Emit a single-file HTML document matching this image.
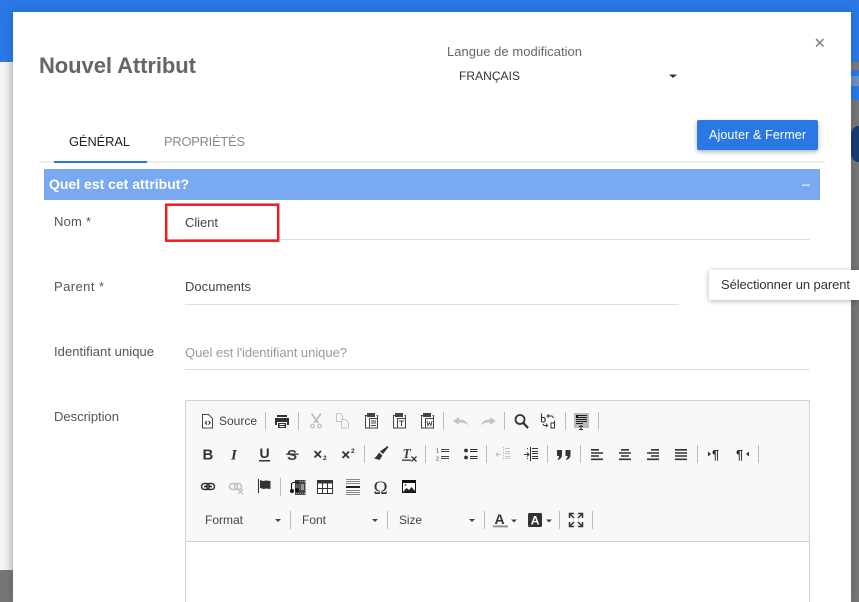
<!DOCTYPE html>
<html lang="fr"><head><meta charset="utf-8"><title>Nouvel Attribut</title>
<style>
html,body{margin:0;padding:0}
body{width:859px;height:602px;overflow:hidden;position:relative;background:#757575;font-family:"Liberation Sans",sans-serif}
div{position:absolute}
svg{position:absolute;left:0;top:0}
text{font-family:"Liberation Sans",sans-serif}
</style></head><body>
<div style="left:0;top:0;width:859px;height:62px;background:#2a78e4"></div>
<div style="left:851px;top:62px;width:8px;height:8px;background:#7a7a7a"></div>
<div style="left:851px;top:70px;width:8px;height:30px;background:#2a78e4"></div>
<div style="left:851px;top:76px;width:8px;height:10px;background:#6f8fbe"></div>
<div style="left:851px;top:126px;width:8px;height:36px;background:#163d73;border-radius:14px 0 0 14px"></div>
<div style="left:0;top:62px;width:13px;height:508px;background:linear-gradient(90deg,#f6f6f6,#f2f2f2 40%,#d8d8d8)"></div>
<div style="left:13px;top:12px;width:838px;height:590px;background:#fff;box-shadow:0 0 8px rgba(0,0,0,.18)"></div>
<div style="left:697px;top:120px;width:121px;height:30px;background:#2a78e4;border-radius:2px;box-shadow:0 2px 5px rgba(0,0,0,.3)"></div>
<div style="left:709px;top:270px;width:150px;height:30px;background:#fff;border-radius:2px 0 0 2px;box-shadow:0 1px 6px rgba(0,0,0,.3)"></div>
<svg width="859" height="602" viewBox="0 0 859 602">
<!-- header -->
<text x="39" y="73" font-size="22" font-weight="700" fill="#666" textLength="157">Nouvel Attribut</text>
<text x="447" y="56" font-size="13" fill="#666" textLength="135">Langue de modification</text>
<text x="459" y="80" font-size="12" fill="#333" textLength="61">FRANÇAIS</text>
<path d="M669 74.500h8l-4 3.500z" fill="#333"/>
<path d="M816 39l7.500 7.500M823.500 39l-7.500 7.500" stroke="#777" stroke-width="1.400" fill="none"/>
<text x="69" y="146" font-size="12.800" fill="#222" textLength="61">GÉNÉRAL</text>
<text x="164" y="146" font-size="12.800" fill="#888" textLength="81">PROPRIÉTÉS</text>
<text x="709" y="139" font-size="12.500" fill="#fff" textLength="97">Ajouter &amp; Fermer</text>
<rect x="39" y="161" width="786" height="2" fill="#eee"/>
<rect x="54" y="161" width="93" height="2" fill="#2a78e4"/>
<rect x="44" y="169" width="776" height="31" fill="#78a9f1"/>
<text x="49" y="189" font-size="14" font-weight="700" fill="#fff" textLength="140">Quel est cet attribut?</text>
<rect x="802" y="184.500" width="8" height="1.200" fill="#e4eefc"/>
<!-- form -->
<text x="54" y="226" font-size="13" fill="#555" textLength="37">Nom *</text>
<text x="185" y="227" font-size="13" fill="#444" textLength="33">Client</text>
<rect x="185" y="239" width="625" height="1" fill="#ddd"/>
<rect x="166.200" y="204.700" width="112" height="36" fill="none" stroke="#f5181c" stroke-width="2.500"/>
<text x="54" y="291" font-size="13" fill="#555" textLength="50">Parent  *</text>
<text x="185" y="291" font-size="13" fill="#444" textLength="66">Documents</text>
<rect x="185" y="304" width="494" height="1" fill="#ddd"/>
<text x="721" y="289" font-size="13" fill="#333" textLength="129">Sélectionner un parent</text>
<text x="54" y="356" font-size="13" fill="#555" textLength="100">Identifiant unique</text>
<text x="185" y="357" font-size="13" fill="#999" textLength="162">Quel est l'identifiant unique?</text>
<rect x="185" y="369" width="625" height="1" fill="#ddd"/>
<text x="54" y="421" font-size="13" fill="#555" textLength="65">Description</text>
<!-- editor -->
<rect x="185.500" y="400.500" width="624" height="210" fill="#fff" stroke="#d1d1d1"/>
<rect x="186" y="401" width="623" height="140" fill="#f8f8f8"/>
<rect x="186" y="541" width="623" height="1" fill="#d1d1d1"/>
<!-- separators -->
<g fill="#bcbcbc">
<rect x="265" y="412" width="1" height="18"/><rect x="298" y="412" width="1" height="18"/><rect x="443" y="412" width="1" height="18"/><rect x="504" y="412" width="1" height="18"/><rect x="565" y="412" width="1" height="18"/><rect x="598" y="412" width="1" height="18"/>
<rect x="364" y="445" width="1" height="18"/><rect x="425" y="445" width="1" height="18"/><rect x="486" y="445" width="1" height="18"/><rect x="547" y="445" width="1" height="18"/><rect x="580" y="445" width="1" height="18"/><rect x="697" y="445" width="1" height="18"/><rect x="758" y="445" width="1" height="18"/>
<rect x="280" y="478" width="1" height="18"/>
<rect x="290" y="511" width="1" height="18"/><rect x="387" y="511" width="1" height="18"/><rect x="484" y="511" width="1" height="18"/><rect x="559" y="511" width="1" height="18"/><rect x="592" y="511" width="1" height="18"/>
</g>
<!-- row 1 -->
<path d="M202.500 414.500h6l4 4v9.500h-10z" fill="#fff" stroke="#444" stroke-width="1"/>
<path d="M207 421l-1.800 1.800 1.800 1.800M208.500 421l1.800 1.800-1.800 1.800" stroke="#333" stroke-width="1.100" fill="none"/>
<text x="219" y="425" font-size="12" fill="#444" textLength="38">Source</text>
<path d="M277 415h10v2h-10zM275 418h14v7h-2v-3h-10v3h-2zM278 423h8v5h-8z" fill="#333"/>
<path d="M279.500 424.500h5M279.500 426.500h5" stroke="#fff"/>
<g stroke="#bbb" stroke-width="1.700" fill="none"><path d="M311.500 413.500l7 9.500M321 413.500l-7 9.500"/><circle cx="312.500" cy="426" r="1.800" stroke-width="1.200"/><circle cx="319.500" cy="426" r="1.800" stroke-width="1.200"/></g>
<path d="M336.500 413.500h4l2 2.500v3M341.500 419.500h4l3 3v5.500h-7zM336.500 413.500v8h5" fill="none" stroke="#c4c4c4"/>
<g fill="none" stroke="#444" stroke-width="1"><path d="M367.500 415.500h-2v12.500h5"/><rect x="367.500" y="413.500" width="7" height="3" fill="#444"/><path d="M376.500 415.500h1v12.500h-8v-9.500h8"/><path d="M371 421h5M371 423h5M371 425.500h5"/></g>
<g fill="none" stroke="#444" stroke-width="1"><path d="M395.500 415.500h-2v12.500h5"/><rect x="395.500" y="413.500" width="7" height="3" fill="#444"/><path d="M404.500 415.500h1v12.500h-8v-9.500h8"/><path d="M399 421h5M401.500 421v5"/></g>
<g fill="none" stroke="#444" stroke-width="1"><path d="M423.500 415.500h-2v12.500h5"/><rect x="423.500" y="413.500" width="7" height="3" fill="#444"/><path d="M432.500 415.500h1v12.500h-8v-9.500h8"/><path d="M427 421l1 4.500 1.500-3 1.500 3 1-4.500" stroke-width=".9"/></g>
<path d="M453 421l6-4v2.500c5 0 8 1.500 9 6-2-2.500-5-3-9-3v2.500z" fill="#c4c4c4"/>
<path d="M496 421l-6-4v2.500c-5 0-8 1.500-9 6 2-2.500 5-3 9-3v2.500z" fill="#c4c4c4"/>
<circle cx="520" cy="419.500" r="4.500" fill="none" stroke="#333" stroke-width="1.800"/><path d="M523.500 423l4.500 5" stroke="#333" stroke-width="2.200"/>
<path d="M541.500 413.500v8.500M541.500 417.500h2.500l1.200 1.500v1.500l-1.200 1.500h-2.500" fill="none" stroke="#333" stroke-width="1.100"/>
<path d="M549 414.500l-1.800 1.500 1.800 1.500M547.500 416h4.500l1.500 2M543 424l1 1.500h3.500M546 423.500l1.500 2-1.500 1.500M551 423h3.500v5h-3.500zM554.500 420.500v7.500" fill="none" stroke="#333"/>
<rect x="574" y="413" width="15" height="15" fill="#bbb"/>
<path d="M576 415.500h11M576 417.500h11M576 419.500h11M576 421.500h11M576 423.500h7" stroke="#222" fill="none"/><path d="M576 415h2v3h-2z" fill="#111"/>
<path d="M579 426.500h4M581 425v4M579 429.500h4" stroke="#333" fill="none"/>
<!-- row 2 -->
<text x="202.500" y="459.500" font-size="15" font-weight="700" fill="#333">B</text>
<text x="231" y="459.500" font-size="15" font-weight="700" font-style="italic" fill="#333" style="font-family:'Liberation Serif',serif">I</text>
<text x="259.500" y="458" font-size="14" font-weight="700" fill="#333">U</text><rect x="259" y="460" width="11" height="1.500" fill="#333"/>
<text x="287" y="460" font-size="15" font-weight="700" fill="#444">S</text><rect x="286" y="453.500" width="12.500" height="1.300" fill="#333"/>
<path d="M314.500 451l6.500 6.500M321 451l-6.500 6.500" stroke="#333" stroke-width="1.800"/><text x="323" y="460" font-size="6.500" font-weight="700" fill="#333">2</text>
<path d="M342.500 451.500l6.500 6.500M349 451.500l-6.500 6.500" stroke="#333" stroke-width="1.800"/><text x="351" y="453" font-size="6.500" font-weight="700" fill="#333">2</text>
<path d="M387.500 446l1 1-5.500 7-3-2.500zM379 452.500l3.500 3-3 4.500c-1.500-.5-4-1.500-6-1.500 2.500-1 3.500-3 5.500-6z" fill="#333"/>
<text x="402.500" y="458" font-size="13.500" font-weight="700" font-style="italic" style="font-family:'Liberation Serif',serif" fill="#444">T</text>
<rect x="402" y="459.500" width="9" height="1.300" fill="#333"/><path d="M411.500 456.500l5 5M416.500 456.500l-5 5" stroke="#333" stroke-width="1.300"/>
<path d="M441 449.500h8M441 451.500h8M441 456.500h8M441 458.500h8" stroke="#444"/><text x="436" y="452.500" font-size="5.500" fill="#333">1</text><text x="436" y="460.500" font-size="5.500" fill="#333">2</text>
<circle cx="466" cy="450.500" r="1.900" fill="#333"/><circle cx="466" cy="457.500" r="1.900" fill="#333"/><path d="M470 449.500h7.500M470 451.500h7.500M470 456.500h7.500M470 458.500h7.500" stroke="#333"/>
<g stroke="#c0c0c0" fill="none"><path d="M503.500 447v13" stroke-dasharray="1.500 1"/><path d="M505 448.500h5M505 451.500h5M505 453.500h5M505 456.500h5M505 458.500h5M496 454.500h5M498 452.500l-2 2 2 2"/></g>
<g stroke="#333" fill="none"><path d="M530.500 447v14"/><path d="M532 448.500h6M532 451.500h6M532 453.500h6M532 456.500h6M532 458.500h6M524 454.500h5M527 452.500l2 2-2 2"/><path d="M527.500 448v2M527.500 458v2" stroke-dasharray="1 1"/></g>
<path d="M557 450h5v5c0 2.500-1.500 4-4 5l-.5-1c1-.6 1.500-1.200 1.600-3H557zM565.500 450h5v5c0 2.500-1.500 4-4 5l-.5-1c1-.6 1.500-1.200 1.600-3h-2.100z" fill="#333"/>
<g fill="none" stroke="#333" stroke-width="1.600">
<path d="M591 449.800h8M591 453h12M591 456h8M591 459.300h12"/>
<path d="M621 449.800h8M619 453h12M621 456h8M619 459.300h12"/>
<path d="M651 449.800h8M647 453h12M651 456h8M647 459.300h12"/>
<path d="M675 449.800h12M675 453h12M675 456h12M675 459.300h12"/>
</g>
<path d="M708 451.500l3 2.500-3 2.500z" fill="#333"/><text x="712" y="459" font-size="13" font-weight="700" fill="#333">¶</text>
<text x="736" y="459" font-size="13" font-weight="700" fill="#333">¶</text><path d="M749 451.500l-3 2.500 3 2.500z" fill="#333"/>
<!-- row 3 -->
<rect x="201.500" y="483.500" width="8" height="6" rx="3" fill="none" stroke="#333" stroke-width="1.500"/><rect x="206.500" y="483.500" width="8" height="6" rx="3" fill="none" stroke="#333" stroke-width="1.500"/><path d="M204 486.500h8" stroke="#333" stroke-width="1.500"/>
<rect x="229.500" y="483.500" width="8" height="6" rx="3" fill="none" stroke="#c0c0c0" stroke-width="1.500"/><rect x="234.500" y="483.500" width="7" height="6" rx="3" fill="none" stroke="#c0c0c0" stroke-width="1.500"/><path d="M238 489l5 5M243 489l-5 5" stroke="#c0c0c0" stroke-width="1.300"/>
<path d="M258.500 479v14" stroke="#333" stroke-width="1.100"/><path d="M260 480l3 1 3-.5 4.500 .5v8l-4-.5-3 .5-3.500-1z" fill="#333"/>
<rect x="295" y="480" width="10.500" height="15" fill="#444"/><path d="M296.500 484h3v6h-3zM301 484h3v6h-3z" fill="#999"/><path d="M296 481.500h9M296 493.500h9" stroke="#aaa" stroke-dasharray="1 1"/>
<path d="M292 483l6-1.500v8" stroke="#111" stroke-width="1.100" fill="none"/><circle cx="292" cy="491" r="2" fill="#111"/><circle cx="297" cy="490" r="2" fill="#111"/><path d="M291.500 491v-8" stroke="#111" stroke-width="1.100"/>
<rect x="317.500" y="480.500" width="15" height="13" fill="#fff" stroke="#333"/><rect x="317.500" y="480.500" width="15" height="3" fill="#333"/><path d="M322.500 483v10M327.500 483v10M318 488.500h14" stroke="#333"/>
<path d="M346 479.500h14M346 481.500h14M346 483.500h14M346 490.500h14M346 492.500h14M346 494.500h14" stroke="#888"/><rect x="346" y="486" width="14" height="2" fill="#222"/>
<text x="373.500" y="494" font-size="19" style="font-family:'Liberation Serif',serif" fill="#333">Ω</text>
<rect x="402.500" y="480.500" width="13" height="12" fill="#fff" stroke="#111"/><path d="M403 492l3.500-4 2.500 2 2.500-3 3.500 4v1z" fill="#222"/><rect x="403" y="481" width="12" height="2" fill="#111"/><circle cx="405.500" cy="485" r="1.100" fill="#777"/>
<!-- row 4 -->
<text x="205" y="524" font-size="12" fill="#444" textLength="38">Format</text>
<path d="M275 519h6l-3 3z" fill="#444"/>
<text x="302" y="524" font-size="12" fill="#444" textLength="24">Font</text>
<path d="M372 519h6l-3 3z" fill="#444"/>
<text x="399" y="524" font-size="12" fill="#444" textLength="23">Size</text>
<path d="M469 519h6l-3 3z" fill="#444"/>
<text x="494.500" y="524" font-size="14" font-weight="700" fill="#333" textLength="12">A</text><rect x="493" y="525.500" width="15" height="1.800" fill="#888"/>
<path d="M511 519.500h6l-3 3z" fill="#444"/>
<rect x="528" y="513" width="14" height="14" rx="1.500" fill="#333"/><text x="530.800" y="524.500" font-size="12" font-weight="700" fill="#fff">A</text>
<path d="M546 519.500h6l-3 3z" fill="#444"/>
<g fill="none" stroke="#333" stroke-width="1.500"><path d="M569.500 518v-4.500h4.500M570 514l4 4M582.500 518v-4.500H578M582 514l-4 4M569.500 522v4.500h4.500M570 526l4-4M582.500 522v4.500H578M582 526l-4-4"/></g>
</svg>
</body></html>
